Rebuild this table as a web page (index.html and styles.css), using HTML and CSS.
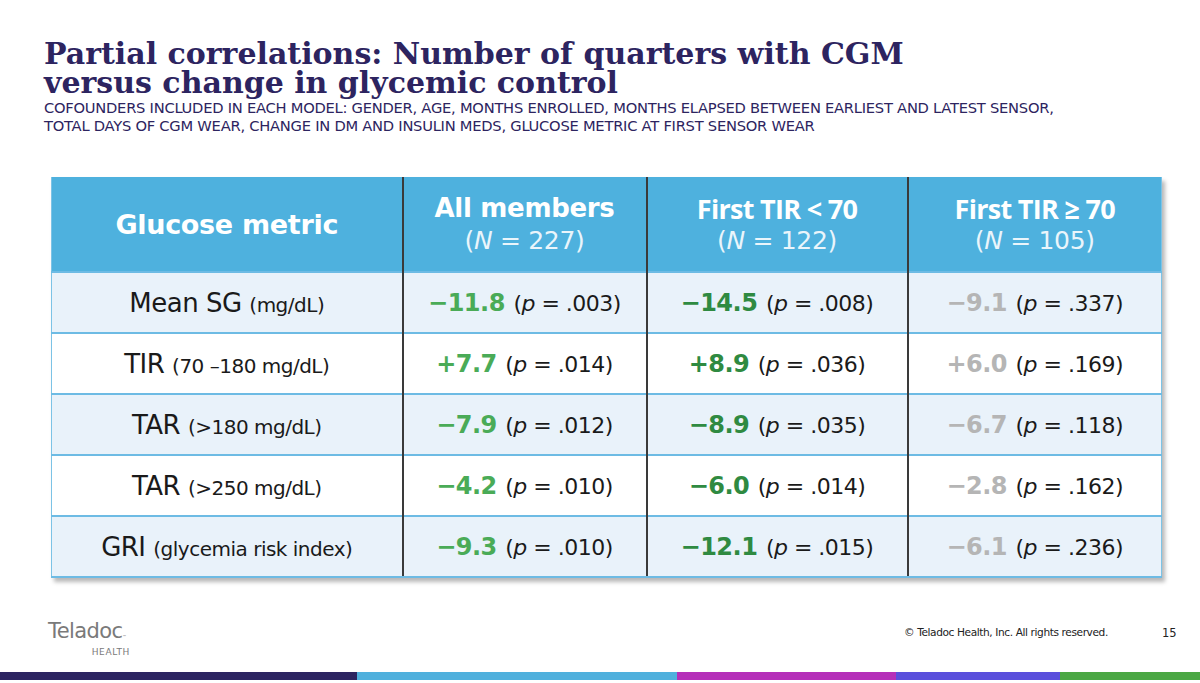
FILE: index.html
```html
<!DOCTYPE html>
<html>
<head>
<meta charset="utf-8">
<link rel="stylesheet" href="styles.css">
</head>
<body>
<div class="slide">
  <header class="head">
    <h1 class="title">Partial correlations: Number of quarters with CGM<br>versus change in glycemic control</h1>
    <p class="subtitle">COFOUNDERS INCLUDED IN EACH MODEL: GENDER, AGE, MONTHS ENROLLED, MONTHS ELAPSED BETWEEN EARLIEST AND LATEST SENSOR,<br>TOTAL DAYS OF CGM WEAR, CHANGE IN DM AND INSULIN MEDS, GLUCOSE METRIC AT FIRST SENSOR WEAR</p>
  </header>

  <table class="grid">
    <colgroup>
      <col class="c1"><col class="c2"><col class="c3"><col class="c4">
    </colgroup>
    <thead>
      <tr>
        <th class="h-metric">Glucose metric</th>
        <th><span class="hb">All members</span><span class="hn">(<i>N</i> = 227)</span></th>
        <th><span class="hb alt">First TIR &lt; 70</span><span class="hn">(<i>N</i> = 122)</span></th>
        <th><span class="hb alt">First TIR ≥ 70</span><span class="hn">(<i>N</i> = 105)</span></th>
      </tr>
    </thead>
    <tbody>
      <tr class="shade">
        <td class="m">Mean SG <small>(mg/dL)</small></td>
        <td><b class="g1">−11.8</b> (<i>p</i> = .003)</td>
        <td><b class="g2">−14.5</b> (<i>p</i> = .008)</td>
        <td><b class="gr">−9.1</b> (<i>p</i> = .337)</td>
      </tr>
      <tr>
        <td class="m">TIR <small>(70 –180 mg/dL)</small></td>
        <td><b class="g1">+7.7</b> (<i>p</i> = .014)</td>
        <td><b class="g2">+8.9</b> (<i>p</i> = .036)</td>
        <td><b class="gr">+6.0</b> (<i>p</i> = .169)</td>
      </tr>
      <tr class="shade">
        <td class="m">TAR <small>(&gt;180 mg/dL)</small></td>
        <td><b class="g1">−7.9</b> (<i>p</i> = .012)</td>
        <td><b class="g2">−8.9</b> (<i>p</i> = .035)</td>
        <td><b class="gr">−6.7</b> (<i>p</i> = .118)</td>
      </tr>
      <tr>
        <td class="m">TAR <small>(&gt;250 mg/dL)</small></td>
        <td><b class="g1">−4.2</b> (<i>p</i> = .010)</td>
        <td><b class="g2">−6.0</b> (<i>p</i> = .014)</td>
        <td><b class="gr">−2.8</b> (<i>p</i> = .162)</td>
      </tr>
      <tr class="shade">
        <td class="m">GRI <small>(glycemia risk index)</small></td>
        <td><b class="g1">−9.3</b> (<i>p</i> = .010)</td>
        <td><b class="g2">−12.1</b> (<i>p</i> = .015)</td>
        <td><b class="gr">−6.1</b> (<i>p</i> = .236)</td>
      </tr>
    </tbody>
  </table>

  <footer class="foot">
    <div class="logo">
      <span class="logo-word">Teladoc<span class="tm">™</span></span>
      <span class="logo-sub">HEALTH</span>
    </div>
    <div class="copy">© Teladoc Health, Inc. All rights reserved.</div>
    <div class="page">15</div>
  </footer>

  <div class="stripe">
    <span class="s1"></span><span class="s2"></span><span class="s3"></span><span class="s4"></span><span class="s5"></span>
  </div>
</div>
</body>
</html>
```

FILE: styles.css
```css
* { box-sizing: border-box; }
html, body { margin: 0; padding: 0; background: #fff; }
.slide {
  width: 1200px;
  height: 683px;
  overflow: hidden;
  display: flex;
  flex-direction: column;
  font-family: "DejaVu Sans", "Liberation Sans", sans-serif;
}
.head { padding: 39px 0 0 44px; }
.title {
  margin: 0;
  font-family: "DejaVu Serif", "Liberation Serif", serif;
  font-weight: bold;
  font-size: 30px;
  line-height: 29px;
  color: #2d2460;
  letter-spacing: 0;
}
.subtitle {
  margin: 2px 0 0 0;
  font-size: 14.7px;
  line-height: 18px;
  color: #2d2460;
  letter-spacing: -0.25px;
}
.grid {
  margin: 42px 0 0 51px;
  width: 1110px;
  border-collapse: collapse;
  table-layout: fixed;
  box-shadow: 3px 4px 4px rgba(0,0,0,0.28);
  border-left: 1.5px solid #7cc3e6;
  border-right: 1.5px solid #7cc3e6;
}
.c1 { width: 351px; }
.c2 { width: 244px; }
.c3 { width: 261px; }
.c4 { width: 254px; }
.grid th {
  background: #4eb1de;
  color: #fff;
  height: 95px;
  padding: 0;
  text-align: center;
  vertical-align: middle;
  border-left: 2px solid #3a3a3a;
  font-weight: normal;
}
.grid th:first-child { border-left: none; }
.h-metric { font-size: 27px; font-weight: bold !important; letter-spacing: -0.3px; }
.hb {
  display: block;
  font-size: 26px;
  font-weight: bold;
  line-height: 33px;
  letter-spacing: -0.3px;
}
.hb.alt { font-family: "Open Sans", "Noto Sans", sans-serif; font-size: 27px; letter-spacing: -0.7px; }
.hn {
  display: block;
  font-size: 25px;
  line-height: 31px;
  color: #eaf5fb;
  font-weight: normal;
  letter-spacing: -0.3px;
}
.grid td {
  height: 61px;
  padding: 0;
  text-align: center;
  vertical-align: middle;
  font-size: 22px;
  color: #1a1a1a;
  border-top: 2px solid #6dbbe4;
  border-left: 2px solid #3a3a3a;
  letter-spacing: -0.5px;
}
.grid td:first-child { border-left: none; }
.grid tbody tr:last-child td { border-bottom: 2px solid #6dbbe4; }
.grid tr.shade td { background: #e9f2fa; }
.grid td.m { font-size: 26px; }
.grid td.m small { font-size: 20px; }
.grid td b { font-size: 24px; margin-right: 2px; }
.g1 { color: #4aab57; }
.g2 { color: #2f8a41; }
.gr { color: #b5b5b5; }

.foot {
  margin-top: auto;
  height: 60px;
  display: flex;
  align-items: flex-start;
  padding: 0 0 0 48px;
}
.logo { display: flex; flex-direction: column; align-items: flex-end; width: 88px; flex: none; padding-top: 8px; }
.logo-word {
  font-family: "DejaVu Sans", sans-serif;
  font-size: 21px;
  color: #7a7a7a;
  letter-spacing: -0.6px;
  line-height: 22px;
  align-self: flex-start;
}
.tm { font-size: 4px; vertical-align: baseline; }
.logo-sub {
  font-size: 9px;
  color: #7a7a7a;
  letter-spacing: 0.6px;
  margin: -1px 6px 0 0;
}
.copy {
  flex: none;
  white-space: nowrap;
  margin: 14px 0 0 768px;
  width: 200px;
  font-size: 10.6px;
  color: #222;
  letter-spacing: -0.4px;
}
.page { flex: none; margin: 14px 0 0 58px; font-size: 11.5px; color: #222; }
.stripe { display: flex; height: 8px; margin-bottom: 3px; }
.stripe span { display: block; height: 100%; }
.s1 { width: 357px; background: #2c2461; }
.s2 { width: 320px; background: #4fb0dd; }
.s3 { width: 219px; background: #b52fb9; }
.s4 { width: 164px; background: #5a4fdc; }
.s5 { flex: 1; background: #4aa744; }
```
